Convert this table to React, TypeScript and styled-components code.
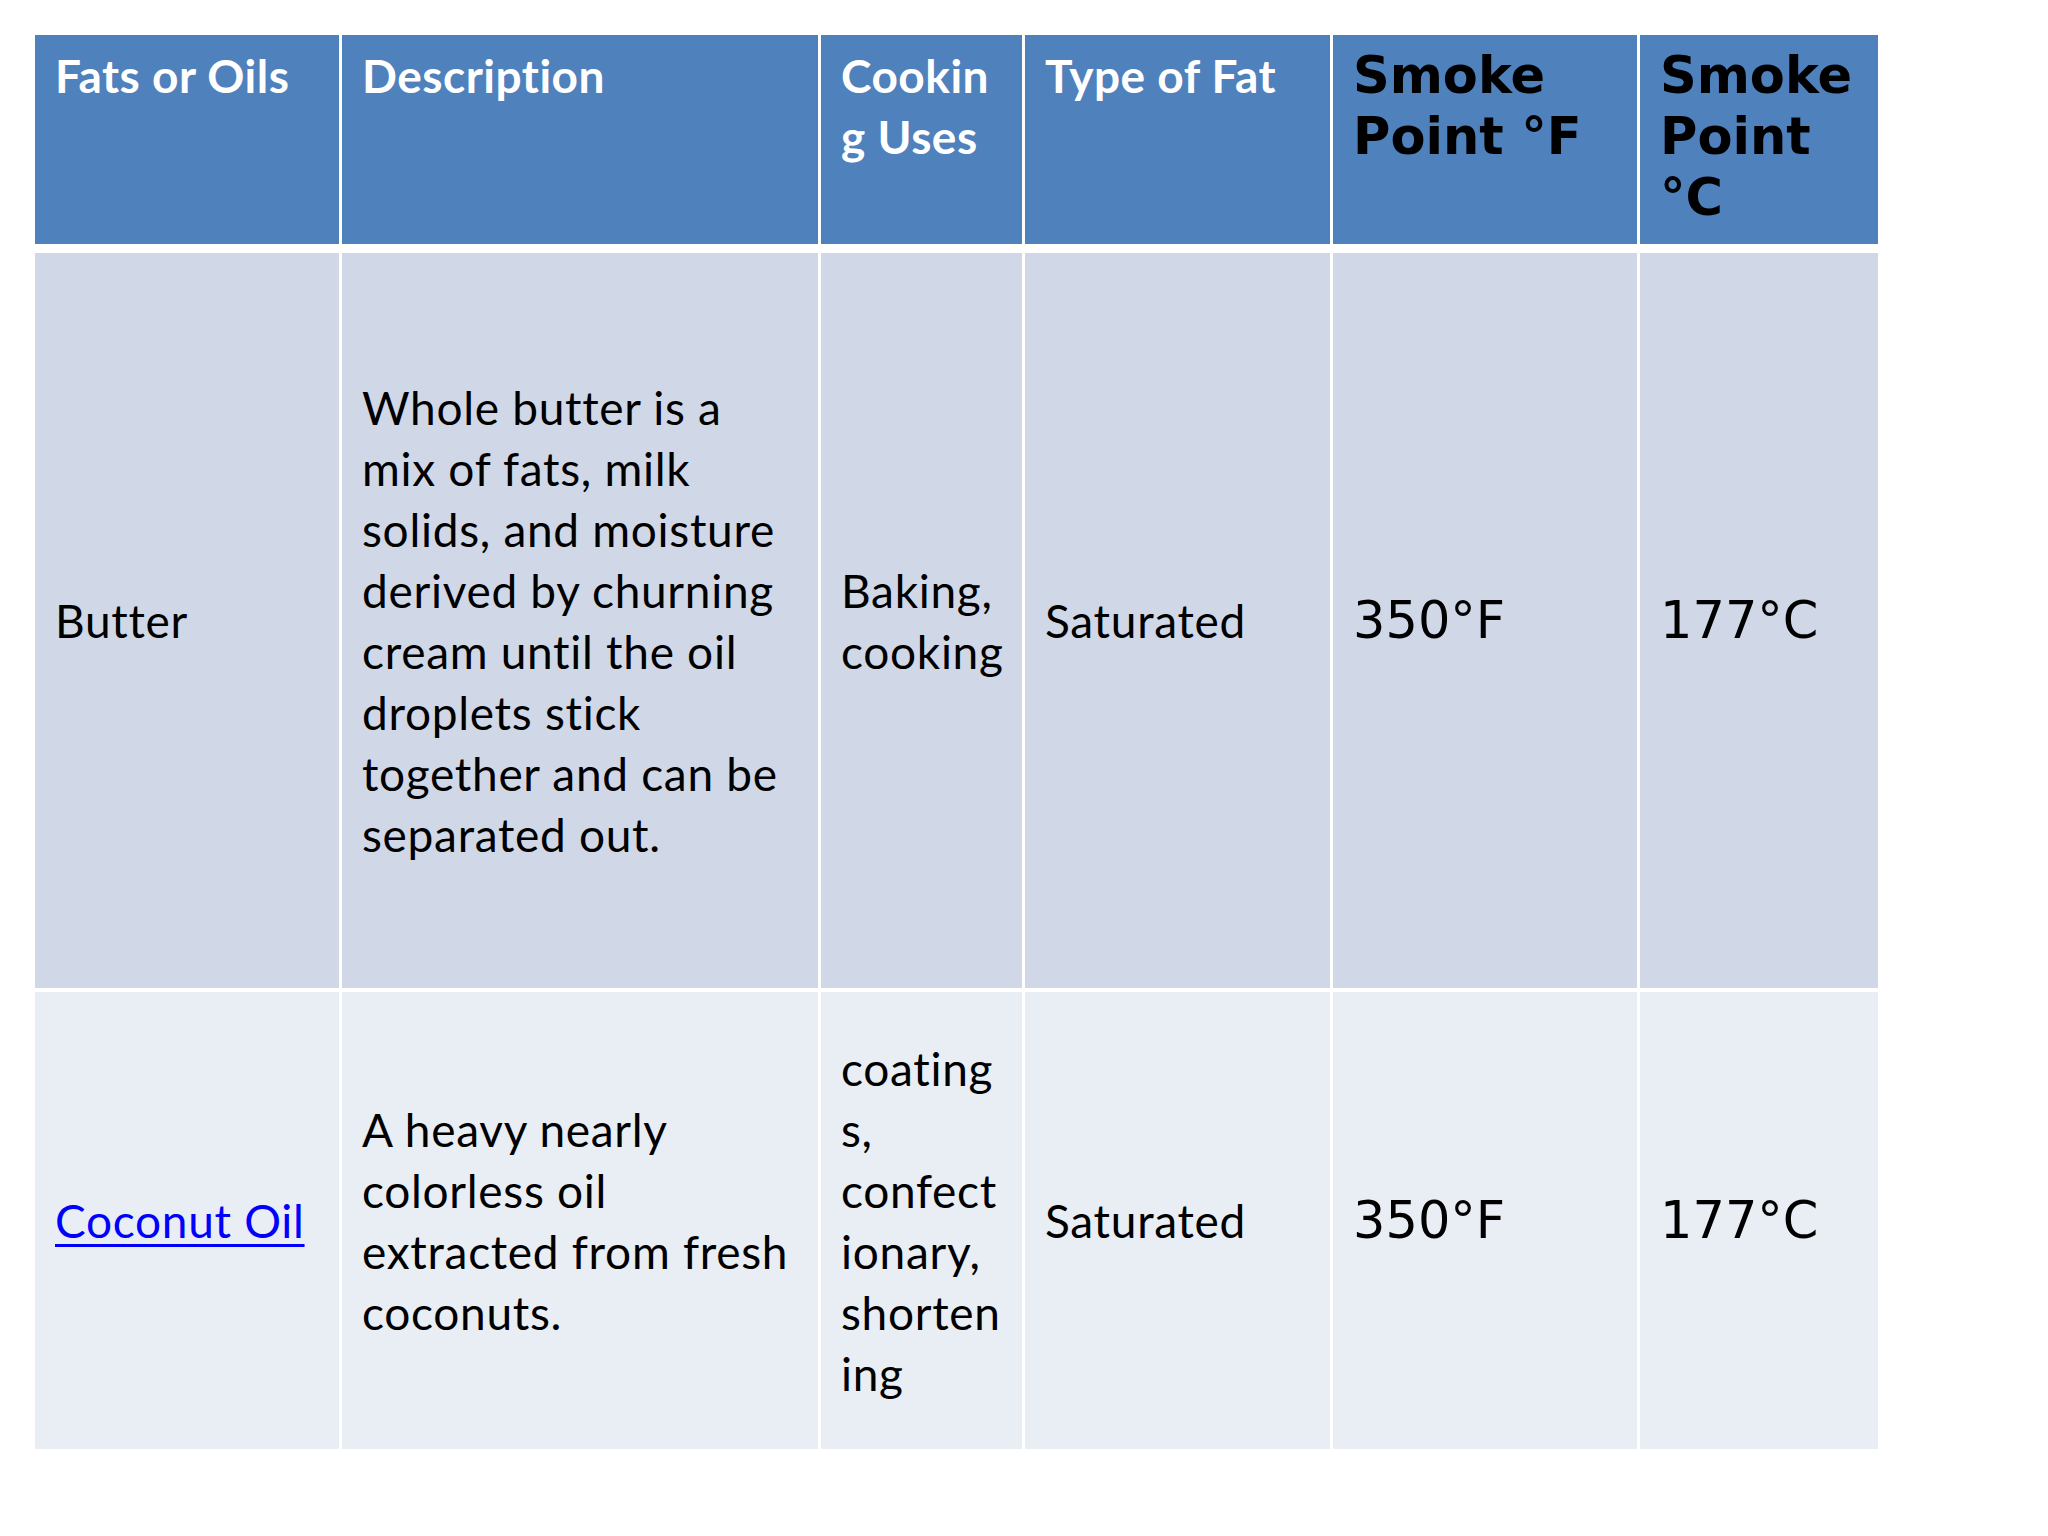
import React from 'react';
import styled, { createGlobalStyle } from 'styled-components';

const GlobalStyle = createGlobalStyle`
  html, body {
    margin: 0;
    padding: 0;
    background: #ffffff;
  }
  body {
    width: 2048px;
    height: 1536px;
    overflow: hidden;
  }
`;

const Page = styled.div`
  padding: 35px 0 0 35px;
`;

const Grid = styled.div`
  display: grid;
  grid-template-columns: 304px 476px 201px 305px 304px 238px;
  grid-template-rows: 214px 735px 457px;
  column-gap: 3px;
  row-gap: 4px;
  width: max-content;
  background: #ffffff;
`;

const HeadCell = styled.div<{ $dark?: boolean }>`
  background: #4f81bd;
  padding: 10px 20px 0 20px;
  margin-bottom: 5px;
  font-family: ${p => (p.$dark ? '"DejaVu Sans", Verdana, sans-serif' : 'Lato, "Open Sans", sans-serif')};
  font-weight: 700;
  font-size: ${p => (p.$dark ? '51px' : '46px')};
  letter-spacing: ${p => (p.$dark ? '0' : '0.5px')};
  line-height: 61px;
  color: ${p => (p.$dark ? '#000000' : '#ffffff')};
  white-space: nowrap;
`;

const BodyCell = styled.div<{ $alt?: boolean; $mono?: boolean }>`
  background: ${p => (p.$alt ? '#e9edf4' : '#d0d8e8')};
  padding: 0 20px;
  display: flex;
  align-items: center;
  font-family: ${p => (p.$mono ? '"DejaVu Sans", Verdana, sans-serif' : 'Lato, "Open Sans", sans-serif')};
  font-size: ${p => (p.$mono ? '51px' : '46px')};
  letter-spacing: ${p => (p.$mono ? '0' : '0.7px')};
  line-height: 61px;
  color: #000000;
  white-space: nowrap;
`;

const Link = styled.a`
  color: #0000ff;
  text-decoration: underline;
  text-decoration-thickness: 3px;
  text-underline-offset: 6px;
`;

const lines = (items: string[]) =>
  items.map((t, i) => (
    <React.Fragment key={i}>
      {i > 0 && <br />}
      {t}
    </React.Fragment>
  ));

const rows = [
  {
    name: 'Butter',
    desc: [
      'Whole butter is a',
      'mix of fats, milk',
      'solids, and moisture',
      'derived by churning',
      'cream until the oil',
      'droplets stick',
      'together and can be',
      'separated out.',
    ],
    uses: ['Baking,', 'cooking'],
    type: 'Saturated',
    f: '350°F',
    c: '177°C',
  },
  {
    name: 'Coconut Oil',
    link: true,
    desc: ['A heavy nearly', 'colorless oil', 'extracted from fresh', 'coconuts.'],
    uses: ['coating', 's,', 'confect', 'ionary,', 'shorten', 'ing'],
    type: 'Saturated',
    f: '350°F',
    c: '177°C',
  },
];

export default function App() {
  return (
    <Page>
      <GlobalStyle />
      <Grid>
        <HeadCell>Fats or Oils</HeadCell>
        <HeadCell>Description</HeadCell>
        <HeadCell>{lines(['Cookin', 'g Uses'])}</HeadCell>
        <HeadCell>Type of Fat</HeadCell>
        <HeadCell $dark>{lines(['Smoke', 'Point °F'])}</HeadCell>
        <HeadCell $dark>{lines(['Smoke', 'Point', '°C'])}</HeadCell>

        {rows.map((r, i) => (
          <React.Fragment key={r.name}>
            <BodyCell $alt={i === 1}>{r.link ? <Link href="#">{r.name}</Link> : r.name}</BodyCell>
            <BodyCell $alt={i === 1}>
              <div>{lines(r.desc)}</div>
            </BodyCell>
            <BodyCell $alt={i === 1}>
              <div>{lines(r.uses)}</div>
            </BodyCell>
            <BodyCell $alt={i === 1}>{r.type}</BodyCell>
            <BodyCell $alt={i === 1} $mono>{r.f}</BodyCell>
            <BodyCell $alt={i === 1} $mono>{r.c}</BodyCell>
          </React.Fragment>
        ))}
      </Grid>
    </Page>
  );
}
